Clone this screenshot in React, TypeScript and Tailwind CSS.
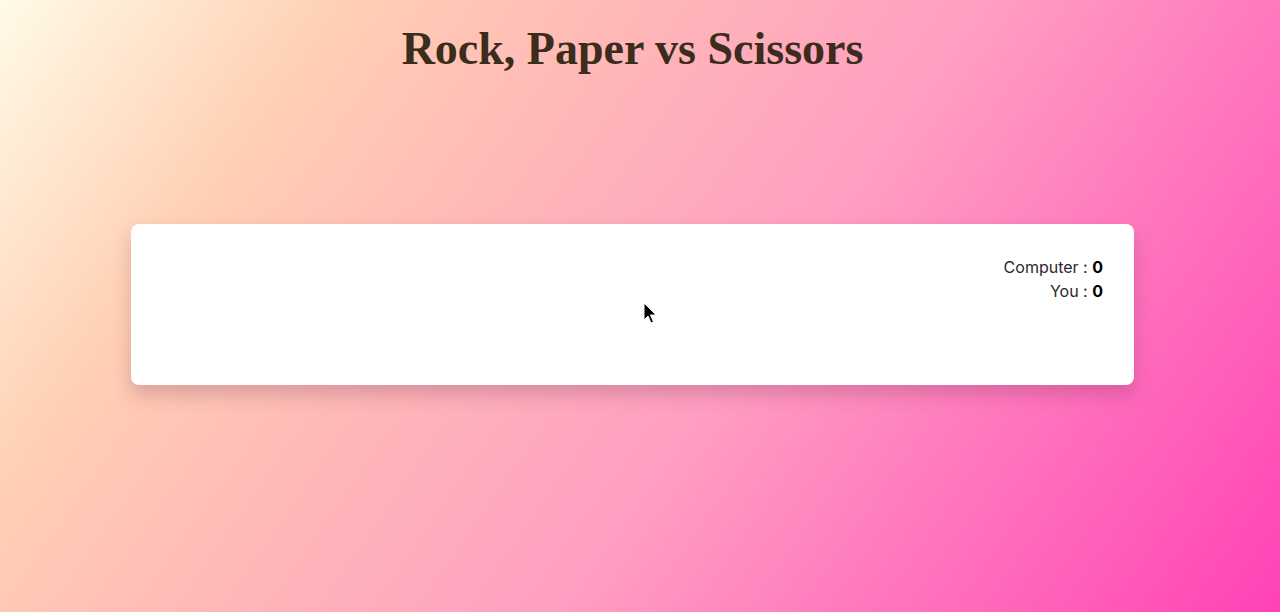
export default function App() {
  return (
    <div className="relative min-h-[612px] w-full overflow-hidden bg-[linear-gradient(125deg,#fffbe8_0%,#ffd0b4_20%,#ffb7b8_38%,#ff9ec2_58%,#ff42b6_100%)] pr-[15px]">
      {/* Title */}
      <h1 className="pt-[22px] text-center font-['Liberation_Serif',serif] text-[46px] font-bold leading-[53px] text-[#3b2c1c]">
        Rock, Paper vs Scissors
      </h1>

      {/* Score card */}
      <div className="mx-auto mt-[149px] h-[161px] w-[1003px] rounded-lg bg-white px-[31px] pt-[31px] shadow-[0_10px_18px_rgba(110,50,80,0.25)]">
        <div className="text-right font-['Inter',sans-serif] text-[16px] leading-[24px] text-[#2a2a2a]">
          <div>
            Computer : <span className="font-bold text-black">0</span>
          </div>
          <div>
            You : <span className="font-bold text-black">0</span>
          </div>
        </div>
      </div>

      {/* Mouse cursor */}
      <svg
        className="absolute left-[643px] top-[302px]"
        width="16"
        height="24"
        viewBox="0 0 16 24"
      >
        <path
          d="M1 1 L1 18 L5 14 L8 21 L10.5 20 L7.5 13 L13 13 Z"
          fill="#000"
          stroke="#fff"
          strokeWidth="1"
        />
      </svg>
    </div>
  );
}
